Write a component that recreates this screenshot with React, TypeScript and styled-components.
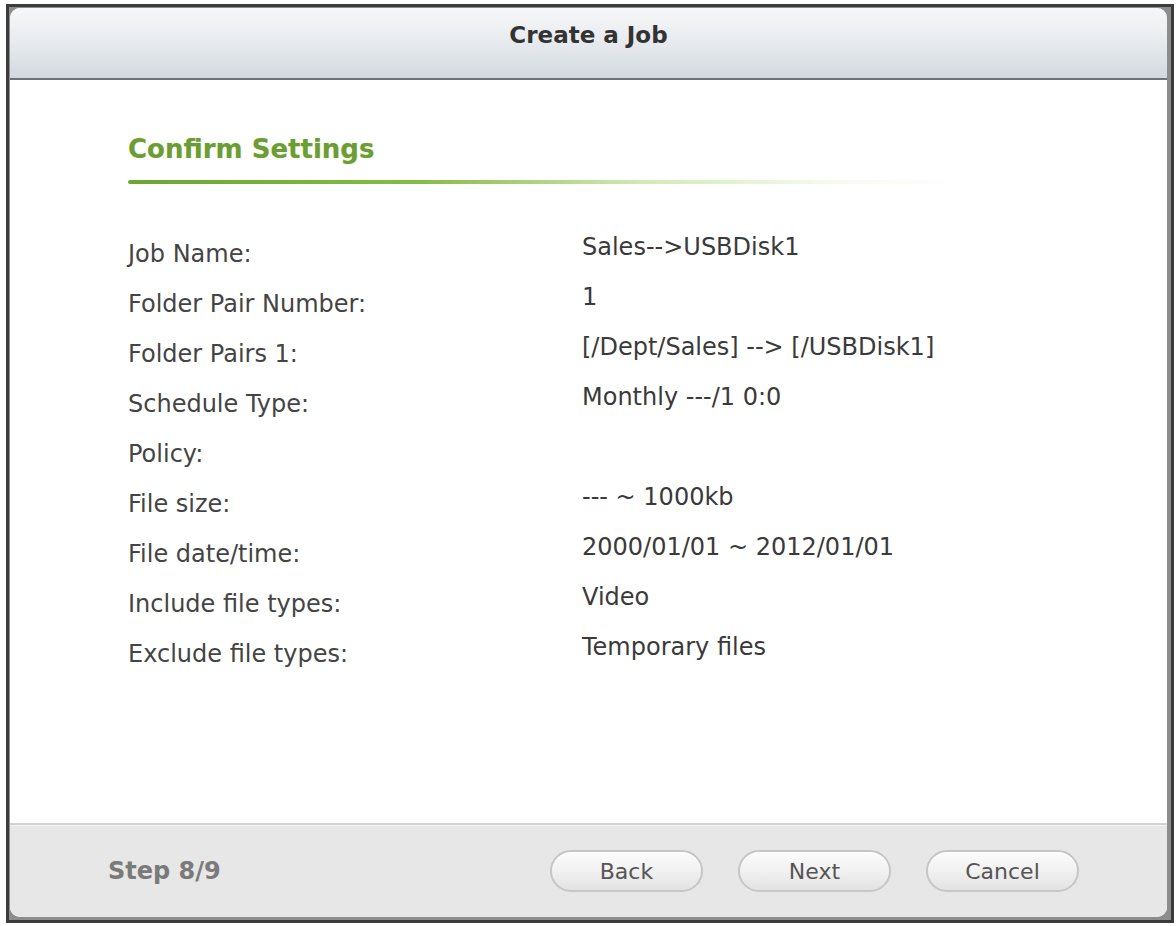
import styled, { createGlobalStyle } from "styled-components";

const GlobalStyle = createGlobalStyle`
  html, body {
    margin: 0;
    padding: 0;
    background: #ffffff;
  }
  body {
    font-family: "DejaVu Sans", Verdana, sans-serif;
  }
`;

const Frame = styled.div`
  box-sizing: border-box;
  width: 1168px;
  height: 919px;
  margin: 4px 0 0 6px;
  border: 3px solid #3b3b3b;
  background: #8d8d8d;
  padding: 1px 4px 3px 1px;
  display: flex;
`;

const Dialog = styled.div`
  flex: 1;
  display: flex;
  flex-direction: column;
  background: #ffffff;
  border-radius: 10px;
  overflow: hidden;
`;

const Header = styled.div`
  box-sizing: border-box;
  height: 72px;
  padding-top: 12px;
  background: linear-gradient(to bottom, #f6f7f8 0%, #e9ecef 45%, #d2d9e0 100%);
  border-bottom: 2px solid #6e7276;
  text-align: center;
`;

const Title = styled.h1`
  margin: 0;
  font-size: 23px;
  line-height: 30px;
  font-weight: 700;
  color: #333333;
`;

const Body = styled.div`
  flex: 1;
  padding: 53px 0 0 118px;
`;

const Heading = styled.h2`
  margin: 0;
  font-size: 26px;
  line-height: 32px;
  font-weight: 700;
  color: #6c9b38;
  text-shadow: 0 0 2px rgba(190, 225, 120, 0.6);
`;

const GreenRule = styled.div`
  width: 830px;
  height: 4px;
  margin-top: 15px;
  border-radius: 2px;
  background: linear-gradient(
    to right,
    #6fa332 0%,
    #86bb45 35%,
    rgba(170, 210, 110, 0.5) 62%,
    rgba(210, 230, 180, 0.2) 85%,
    rgba(255, 255, 255, 0) 100%
  );
`;

const Rows = styled.div`
  margin-top: 45px;
  display: flex;
  flex-direction: column;
`;

const Row = styled.div`
  height: 50px;
  display: flex;
  align-items: flex-start;
`;

const Label = styled.div`
  width: 454px;
  padding-top: 7px;
  font-size: 24px;
  line-height: 36px;
  color: #444444;
`;

const Value = styled.div`
  font-size: 24px;
  line-height: 36px;
  color: #3a3a3a;
`;

const Footer = styled.div`
  box-sizing: border-box;
  height: 94px;
  display: flex;
  align-items: center;
  justify-content: space-between;
  padding: 0 88px 0 98px;
  background: #e7e7e7;
  border-top: 2px solid #d3d3d3;
  box-shadow: inset 0 1px 0 #f4f4f4;
`;

const Step = styled.div`
  font-size: 24px;
  font-weight: 700;
  color: #7a7a7a;
`;

const Buttons = styled.div`
  display: flex;
  gap: 35px;
`;

const Button = styled.button`
  box-sizing: border-box;
  width: 153px;
  height: 42px;
  border: 2px solid #c6c6c6;
  border-radius: 21px;
  background: linear-gradient(to bottom, #fcfcfc 0%, #f1f1f1 50%, #e2e2e2 100%);
  box-shadow: inset 0 1px 0 #ffffff;
  font-family: "DejaVu Sans", Verdana, sans-serif;
  font-size: 22px;
  color: #555555;
  cursor: pointer;
  padding: 0;
`;

const settings: [string, string][] = [
  ["Job Name:", "Sales-->USBDisk1"],
  ["Folder Pair Number:", "1"],
  ["Folder Pairs 1:", "[/Dept/Sales] --> [/USBDisk1]"],
  ["Schedule Type:", "Monthly ---/1 0:0"],
  ["Policy:", ""],
  ["File size:", "--- ~ 1000kb"],
  ["File date/time:", "2000/01/01 ~ 2012/01/01"],
  ["Include file types:", "Video"],
  ["Exclude file types:", "Temporary files"],
];

export default function App() {
  return (
    <>
      <GlobalStyle />
      <Frame>
        <Dialog>
          <Header>
            <Title>Create a Job</Title>
          </Header>
          <Body>
            <Heading>Confirm Settings</Heading>
            <GreenRule />
            <Rows>
              {settings.map(([label, value]) => (
                <Row key={label}>
                  <Label>{label}</Label>
                  <Value>{value}</Value>
                </Row>
              ))}
            </Rows>
          </Body>
          <Footer>
            <Step>Step 8/9</Step>
            <Buttons>
              <Button>Back</Button>
              <Button>Next</Button>
              <Button>Cancel</Button>
            </Buttons>
          </Footer>
        </Dialog>
      </Frame>
    </>
  );
}
